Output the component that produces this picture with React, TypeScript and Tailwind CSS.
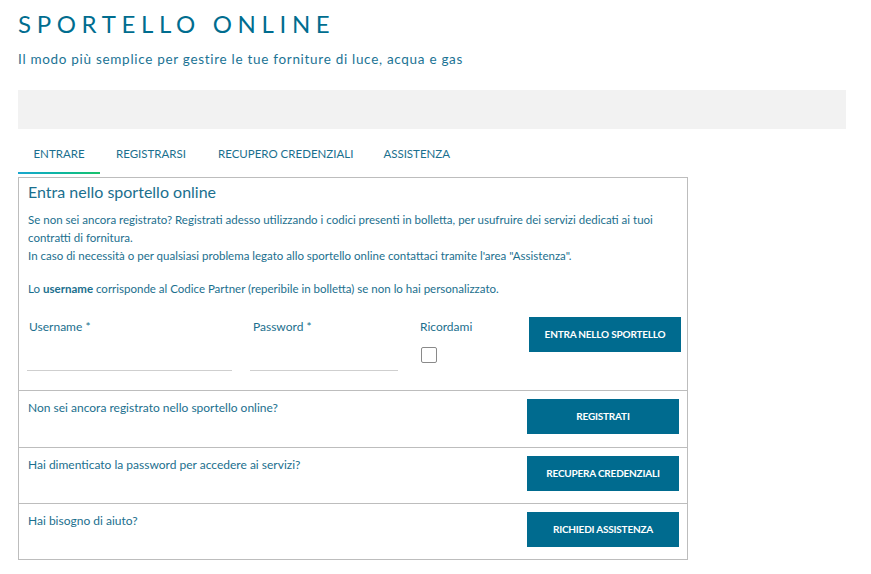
import React from 'react';

const teal = 'text-[#1b6f8e]';

const Btn: React.FC<{ label: string }> = ({ label }) => (
  <button className="shrink-0 w-[152px] h-[35px] bg-[#006b8f] text-white text-[10px] font-bold tracking-[-0.2px] uppercase">
    {label}
  </button>
);

const Row: React.FC<{ text: string; action: string; h: string }> = ({ text, action, h }) => (
  <div className={`flex justify-between border-t border-[#bdbdbd] ${h} pl-[9px] pr-[8px] pt-[8px]`}>
    <p className={`text-[12px] ${teal}`}>{text}</p>
    <Btn label={action} />
  </div>
);

export default function App() {
  return (
    <div className="w-[871px] min-h-[574px] bg-white px-[18px] pt-[10px] font-['Lato',sans-serif]">
      <h1 className="text-[24px] leading-[28px] font-normal tracking-[0.235em] text-[#006d8f]">SPORTELLO ONLINE</h1>
      <p className="mt-[13px] text-[13.5px] leading-[16px] tracking-[0.7px] text-[#1b7394]">
        Il modo più semplice per gestire le tue forniture di luce, acqua e gas
      </p>

      <div className="mt-[23px] h-[39px] w-[828px] bg-[#f2f2f2]" />

      <nav className="flex mt-[12px] h-[33px] text-[11.5px] text-[#1b6f8e] uppercase">
        <div className="w-[82px] flex flex-col items-center justify-between pt-[4px]">
          <span>Entrare</span>
          <span className="block h-[2px] w-full bg-gradient-to-r from-[#1aa6cf] to-[#19c26a]" />
        </div>
        <span className="ml-[16px] pt-[4px]">Registrarsi</span>
        <span className="ml-[32px] pt-[4px]">Recupero credenziali</span>
        <span className="ml-[30px] pt-[4px]">Assistenza</span>
      </nav>

      <div className="mt-[3px] w-[670px] border border-[#bdbdbd]">
        <div className="h-[212px] pl-[8px] pr-[6px] pt-[4px]">
          <h2 className={`pl-[1px] text-[16px] leading-[20px] ${teal}`}>Entra nello sportello online</h2>
          <div className={`pl-[1px] mt-[9px] text-[11.5px] leading-[18px] ${teal}`}>
            <p>
              Se non sei ancora registrato? Registrati adesso utilizzando i codici presenti in bolletta, per usufruire dei servizi dedicati ai tuoi contratti di fornitura.
            </p>
            <p>In caso di necessità o per qualsiasi problema legato allo sportello online contattaci tramite l'area "Assistenza".</p>
            <p className="mt-[15px]">
              Lo <b className="font-bold">username</b> corrisponde al Codice Partner (reperibile in bolletta) se non lo hai personalizzato.
            </p>
          </div>

          <div className="flex mt-[20px]">
            <div className="shrink-0 w-[205px] flex flex-col">
              <label className={`pl-[2px] text-[12px] ${teal}`}>Username *</label>
              <div className="mt-[34px] h-[1px] bg-[#cfcfcf]" />
            </div>
            <div className="shrink-0 ml-[18px] w-[148px] flex flex-col">
              <label className={`pl-[3px] text-[12px] ${teal}`}>Password *</label>
              <div className="mt-[34px] h-[1px] bg-[#cfcfcf]" />
            </div>
            <div className="shrink-0 ml-[22px] w-[109px] flex flex-col">
              <label className={`text-[12px] ${teal}`}>Ricordami</label>
              <span className="mt-[11px] ml-[1px] block w-[16px] h-[16px] border border-[#8a8a8a] rounded-[2px]" />
            </div>
            <div className="-mt-[1px]">
              <Btn label="Entra nello sportello" />
            </div>
          </div>
        </div>
        <Row h="h-[57px]" text="Non sei ancora registrato nello sportello online?" action="Registrati" />
        <Row h="h-[56px]" text="Hai dimenticato la password per accedere ai servizi?" action="Recupera credenziali" />
        <Row h="h-[56px]" text="Hai bisogno di aiuto?" action="Richiedi assistenza" />
      </div>
    </div>
  );
}
